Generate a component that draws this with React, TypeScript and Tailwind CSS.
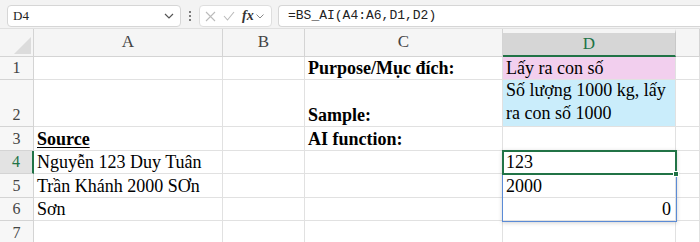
import React from "react";

const serif = "font-['Liberation_Serif','Times_New_Roman',serif]";

const cols = ["A", "B", "C", "D", ""];
const rowHeights = ["h-[23px]", "h-[47px]", "h-[24px]", "h-[23px]", "h-[24px]", "h-[23px]", "h-[24px]"];

type Cell = { text?: string; cls?: string; bg?: string };

const data: Record<number, Record<string, Cell>> = {
  1: {
    C: { text: "Purpose/Mục đích:", cls: "font-bold whitespace-nowrap" },
    D: { text: "Lấy ra con số", bg: "bg-[#f2cfee]", cls: "whitespace-nowrap" },
  },
  2: {
    C: { text: "Sample:", cls: "font-bold whitespace-nowrap" },
    D: { text: "Số lượng 1000 kg, lấy ra con số 1000", bg: "bg-[#caedfb]", cls: "whitespace-normal leading-[23px] pb-[1px]" },
  },
  3: {
    A: { text: "Source", cls: "font-bold underline underline-offset-2 whitespace-nowrap" },
    C: { text: "AI function:", cls: "font-bold whitespace-nowrap" },
  },
  4: { A: { text: "Nguyễn 123 Duy Tuân", cls: "whitespace-nowrap" }, D: { text: "123" } },
  5: { A: { text: "Trần Khánh 2000 SƠn", cls: "whitespace-nowrap" }, D: { text: "2000" } },
  6: { A: { text: "Sơn" }, D: { text: "0", cls: "justify-end pr-[4px]" } },
};

function Toolbar() {
  return (
    <div className="flex items-start h-[29px] bg-[#f3f3f3] border-b border-[#e0e0e0] pt-[5px] pl-[7px] gap-[6px]">
      <div className="flex items-center justify-between w-[174px] h-[22px] bg-white border border-[#d6d6d6] rounded-[4px] pl-[5px] pr-[6px]">
        <span className="text-[13px] text-[#222] font-['Liberation_Serif',serif]">D4</span>
        <svg width="10" height="6" viewBox="0 0 10 6" fill="none" stroke="#555" strokeWidth="1.2">
          <path d="M1 1l4 4 4-4" />
        </svg>
      </div>
      <div className="flex flex-col gap-[2px] px-[2px] pt-[6px]">
        <span className="w-[2px] h-[2px] bg-[#555] rounded-full" />
        <span className="w-[2px] h-[2px] bg-[#555] rounded-full" />
        <span className="w-[2px] h-[2px] bg-[#555] rounded-full" />
      </div>
      <div className="flex items-center gap-[7px] w-[73px] h-[22px] bg-white border border-[#dedede] rounded-[4px] px-[5px]">
        <svg width="11" height="11" viewBox="0 0 11 11" stroke="#bbb" strokeWidth="1.1">
          <path d="M1 1l9 9M10 1l-9 9" />
        </svg>
        <svg width="12" height="10" viewBox="0 0 12 10" fill="none" stroke="#bbb" strokeWidth="1.1">
          <path d="M1 5l3.5 4L11 1" />
        </svg>
        <span className="flex items-center gap-[2px]">
          <span className="italic font-bold text-[14px] text-[#333] font-['Liberation_Serif',serif] leading-none">fx</span>
          <svg width="8" height="5" viewBox="0 0 8 5" fill="none" stroke="#888" strokeWidth="1">
            <path d="M0.5 0.5l3.5 3.5 3.5-3.5" />
          </svg>
        </span>
      </div>
      <div className="flex-1 flex items-center h-[22px] bg-white border border-[#d6d6d6] rounded-l-[4px] border-r-0 pl-[9px]">
        <span className="text-[13px] text-[#222] font-['Liberation_Mono',monospace]">=BS_AI(A4:A6,D1,D2)</span>
      </div>
    </div>
  );
}

function Grid() {
  return (
    <div className={`relative grid grid-cols-[34px_189px_82px_198px_173px_1fr] bg-[#f5f5f5] ${serif}`}>
      <div className="h-[28px] bg-[#f5f5f5] border-r border-b border-[#d4d4d4] flex items-end justify-end p-[2px]">
        <div className="w-0 h-0 border-l-[17px] border-l-transparent border-b-[17px] border-b-[#dcdcdc]" />
      </div>
      {cols.map((c, i) =>
        c === "D" ? (
          <div key={i} className="h-[28px] bg-[#d6d6d6] border-r border-[#c8c8c8] border-t-[4px] border-t-[#f5f5f5] border-b-2 border-b-[#217346] flex items-center justify-center text-[17px] text-[#217346]">
            {c}
          </div>
        ) : (
          <div key={i} className="h-[28px] bg-[#f5f5f5] border-r border-b border-[#d4d4d4] flex items-end justify-center pb-[2px] text-[17px] text-[#444]">
            {c}
          </div>
        )
      )}
      {rowHeights.map((h, ri) => {
        const r = ri + 1;
        return (
          <React.Fragment key={r}>
            <div
              className={`${h} flex items-end justify-center pb-[1px] text-[16px] leading-[21px] ${
                r === 4
                  ? "bg-[#e3e3e3] text-[#217346] border-r-2 border-r-[#217346] border-b border-b-[#d4d4d4]"
                  : "bg-[#f7f7f7] text-[#444] border-r border-b border-[#d4d4d4]"
              }`}
            >
              {r}
            </div>
            {cols.map((c, ci) => {
              const cell = data[r]?.[c] || {};
              return (
                <div
                  key={ci}
                  className={`${h} ${cell.bg || "bg-white"} border-r border-b border-[#e1e1e1] flex items-end px-[3px] text-[18px] text-black leading-[22px] overflow-visible ${cell.cls || ""}`}
                >
                  {cell.text}
                </div>
              );
            })}
          </React.Fragment>
        );
      })}
      {/* spill range outline D4:D6 */}
      <div className="absolute left-[502px] top-[121px] w-[175px] h-[72px] border border-[#5b8bd6] shadow-[0_1px_4px_rgba(0,0,0,0.18)] pointer-events-none" />
      {/* active cell D4 */}
      <div className="absolute left-[502px] top-[121px] w-[175px] h-[25px] border-2 border-[#217346] pointer-events-none">
        <div className="absolute right-[-4px] bottom-[-4px] w-[6px] h-[6px] bg-[#217346] border border-white" />
      </div>
    </div>
  );
}

export default function App() {
  return (
    <div className="w-[700px] h-[242px] overflow-hidden bg-white">
      <Toolbar />
      <Grid />
    </div>
  );
}
